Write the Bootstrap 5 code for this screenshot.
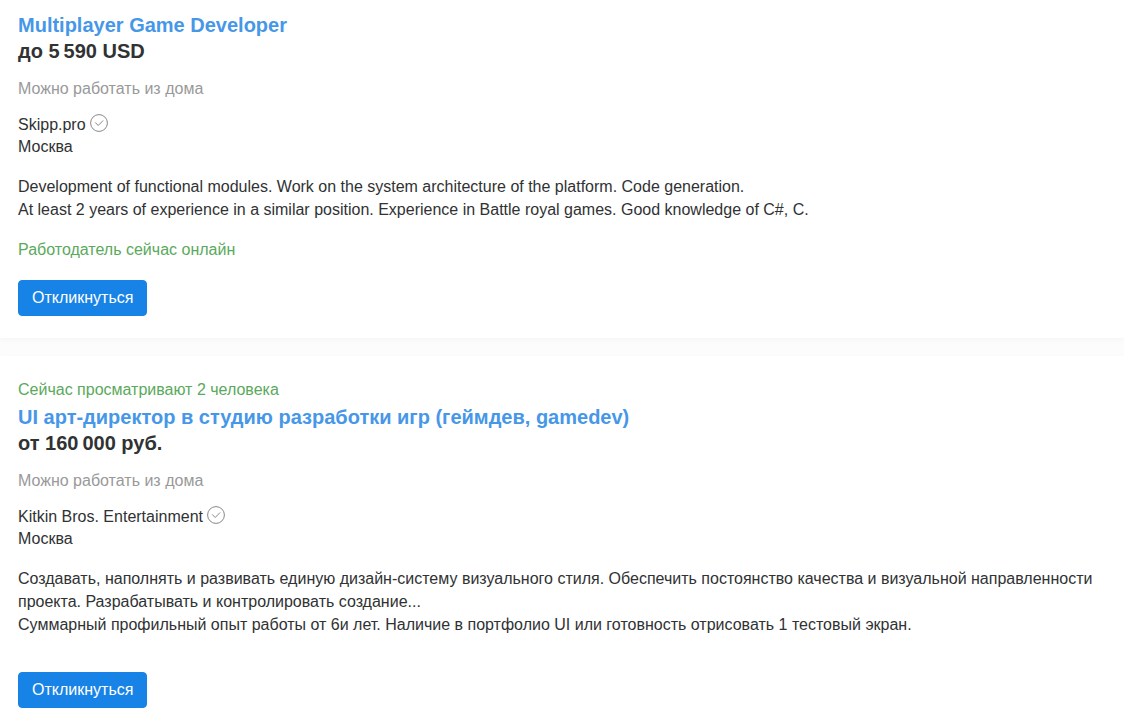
<!DOCTYPE html>
<html lang="ru">
<head>
<meta charset="utf-8">
<meta name="viewport" content="width=device-width, initial-scale=1">
<title>Вакансии</title>
<link href="https://cdn.jsdelivr.net/npm/bootstrap@5.3.0/dist/css/bootstrap.min.css" rel="stylesheet">
<style>
body { font-family: "Liberation Sans", Arial, sans-serif; font-size: 16px; line-height: 22px; color: #303233; background: #fcfcfc; }
.vacancy { padding: 12px 18px 22px; background: #fff; box-shadow: 0 2px 6px rgba(0, 0, 0, .03); }
.vacancy + .vacancy { margin-top: 18px; padding-top: 23px; padding-bottom: 14px; }
.vacancy-title, .salary { font-size: 20px; line-height: 26px; font-weight: 700; }
.vacancy-title a { color: #4797e8; }
.watching { margin-bottom: 3px; }
.remote { color: #999; margin-top: 14px; }
.company { margin-top: 14px; }
.company a { color: inherit; }
.trusted { width: 18px; height: 18px; }
.summary { margin-top: 17px; line-height: 23px; }
.status { color: #5aa95c; }
.online { margin-top: 18px; }
.btn-respond { --bs-btn-color: #fff; --bs-btn-bg: #1883e6; --bs-btn-border-color: #1883e6; --bs-btn-hover-color: #fff; --bs-btn-hover-bg: #1272cc; --bs-btn-padding-x: 13px; --bs-btn-padding-y: 6px; --bs-btn-line-height: 22px; --bs-btn-border-radius: 4px; margin-top: 19px; }
.summary + .btn-respond { margin-top: 36px; }
</style>
</head>
<body>
<main>
  <article class="vacancy">
    <h2 class="vacancy-title mb-0"><a href="#" class="text-decoration-none">Multiplayer Game Developer</a></h2>
    <div class="salary">до 5&#8239;590 USD</div>
    <div class="remote">Можно работать из дома</div>
    <div class="company d-flex align-items-start">
      <a href="#" class="text-decoration-none">Skipp.pro</a>
      <svg class="trusted ms-1" viewBox="0 0 18 18" fill="none" stroke="#888" aria-hidden="true"><circle cx="9" cy="9" r="8.4"/><path d="M5.2 8.4l3 3.1 4.9-5"/></svg>
    </div>
    <div>Москва</div>
    <div class="summary">
      <div>Development of functional modules. Work on the system architecture of the platform. Code generation.</div>
      <div>At least 2 years of experience in a similar position. Experience in Battle royal games. Good knowledge of C#, C.</div>
    </div>
    <div class="status online">Работодатель сейчас онлайн</div>
    <button type="button" class="btn btn-respond">Откликнуться</button>
  </article>
  <article class="vacancy">
    <div class="status watching">Сейчас просматривают 2 человека</div>
    <h2 class="vacancy-title mb-0"><a href="#" class="text-decoration-none">UI арт-директор в студию разработки игр (геймдев, gamedev)</a></h2>
    <div class="salary">от 160&#8239;000 руб.</div>
    <div class="remote">Можно работать из дома</div>
    <div class="company d-flex align-items-start">
      <a href="#" class="text-decoration-none">Kitkin Bros. Entertainment</a>
      <svg class="trusted ms-1" viewBox="0 0 18 18" fill="none" stroke="#888" aria-hidden="true"><circle cx="9" cy="9" r="8.4"/><path d="M5.2 8.4l3 3.1 4.9-5"/></svg>
    </div>
    <div>Москва</div>
    <div class="summary">
      <div>Создавать, наполнять и развивать единую дизайн-систему визуального стиля. Обеспечить постоянство качества и визуальной направленности проекта. Разрабатывать и контролировать создание...</div>
      <div>Суммарный профильный опыт работы от 6и лет. Наличие в портфолио UI или готовность отрисовать 1 тестовый экран.</div>
    </div>
    <button type="button" class="btn btn-respond">Откликнуться</button>
  </article>
</main>
<script src="https://cdn.jsdelivr.net/npm/bootstrap@5.3.0/dist/js/bootstrap.bundle.min.js"></script>
</body>
</html>
